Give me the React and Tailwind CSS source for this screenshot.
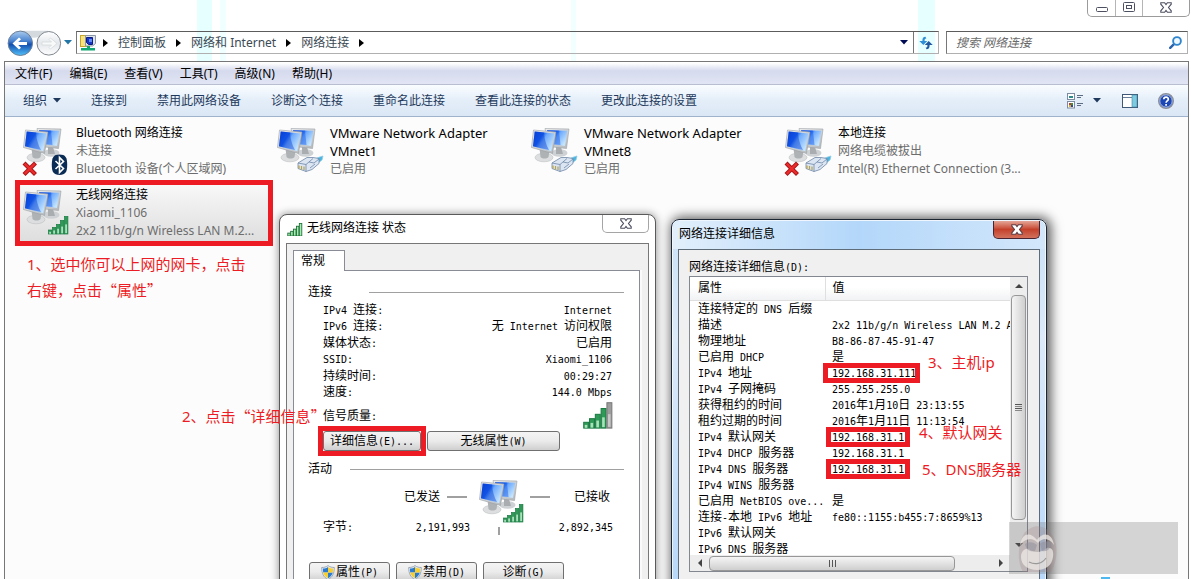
import React from "react";

const UI = "font-['Noto_Sans','Noto_Sans_CJK_SC',sans-serif]";

/* Text in the dialog font: Latin characters take half the width of a Chinese one. */
function Sim({ children }) {
  return String(children)
    .split(/([\x20-\x7e]+)/)
    .filter(Boolean)
    .map((run, i) =>
      /^[\x20-\x7e]/.test(run) ? (
        <span key={i} className="whitespace-pre font-['DejaVu_Sans_Mono',monospace] text-[10px]">{run}</span>
      ) : (
        run
      )
    );
}

function Monitors({ id }) {
  return (
    <>
      <defs>
        <linearGradient id={id + "s"} x1="0" y1="0" x2="1" y2=".6">
          <stop offset="0" stopColor="#0b45dc" />
          <stop offset="0.4" stopColor="#1d66f2" />
          <stop offset="0.55" stopColor="#6fabfb" />
          <stop offset="1" stopColor="#c4e4ff" />
        </linearGradient>
        <linearGradient id={id + "f"} x1="0" y1="0" x2="1" y2="1">
          <stop offset="0" stopColor="#f0f0f0" />
          <stop offset="1" stopColor="#b2b6b9" />
        </linearGradient>
      </defs>
      <ellipse cx="29.500" cy="27" rx="8" ry="3.800" fill="#cfd2d4" />
      <path d="M26 20l5 1 2 7h-7z" fill="#a9adb0" />
      <path d="M15 2.500l24 .5L36.500 22.500l-18-2z" fill={`url(#${id}f)`} stroke="#9ba0a4" strokeWidth=".6" />
      <path d="M17 4.200l20.300.5L35 20l-14-2z" fill={`url(#${id}s)`} />
      <path d="M17 4.200l12 .3 1.500 14.600L21 18z" fill="#1659e6" opacity=".45" />
      <ellipse cx="14" cy="31.500" rx="9" ry="4.300" fill="#dcdedf" stroke="#b4b8bb" strokeWidth=".5" />
      <path d="M9.500 22l10 3-1 6c-2 2-6 2-8 0z" fill="#aeb2b5" />
      <path d="M3.500 4L26 6 22.500 27.500 1.500 21.500z" fill={`url(#${id}f)`} stroke="#9a9fa3" strokeWidth=".6" />
      <path d="M4.700 5.500L24.400 7.400 21.300 25.300 3 20.200z" fill={`url(#${id}s)`} />
      <path d="M10.500 6l3.500.4c.5 7 2 12 5 17.600L3 20.200 4.700 5.500z" fill="#0034cc" opacity=".4" />
    </>
  );
}

function Bars({ x = 0, y = 0, s = 1, light, dim }) {
  const bars = [[0, 14, 4], [4, 11.500, 6.500], [8, 8.500, 9.500], [12, 4.500, 13.500], [16, 0.500, 17.500]];
  return (
    <g transform={`translate(${x} ${y}) scale(${s})`}>
      {bars.map(([bx, by, h], i) => {
        const gray = dim && i === 4;
        return (
          <g key={bx}>
            <rect
              x={bx + 0.5}
              y={by}
              width="3.400"
              height={h}
              fill={gray ? "#9d9d9d" : light ? "#a5ecb0" : "#2f9a58"}
              stroke={gray ? "#777" : light ? "#1c6b35" : "#1a7a42"}
              strokeWidth={light ? 1.2 : 0.7}
            />
            {!light && <rect x={bx + 1.2} y={by + h * 0.45} width="1.800" height={h * 0.5} fill={gray ? "#c8c8c8" : "#a9e2ba"} />}
          </g>
        );
      })}
    </g>
  );
}

function AdapterIcon({ id, badge, off }) {
  return (
    <svg viewBox="0 0 50 50" className="h-[50px] w-[50px] shrink-0" aria-hidden="true">
      <Monitors id={id} />
      {badge === "signal" && <Bars x={26} y={28} />}
      {badge === "bluetooth" && (
        <g>
          <path d="M37.500 28.500c6 0 7.700 3 7.700 10.200s-1.700 10.200-7.700 10.200-7.700-3-7.700-10.200 1.700-10.200 7.700-10.200z" fill="#0b2c55" />
          <path d="M33.500 35l8 7.500-4 4V31.500l4 4-8 7.500" fill="none" stroke="#fff" strokeWidth="1.600" />
        </g>
      )}
      {badge === "plug" && (
        <g stroke="#6f86a6" strokeWidth=".8">
          <path d="M38 34c4-3 6-3 9-4l-1 4-5 4z" fill="#48b4e0" stroke="#8fcbe4" />
          <path d="M22 37l9-5.500h6l6 1v5l-7 6-6 2-8-3z" fill="#dce6f3" />
          <path d="M22 37l8 1.500 7-6M30 38.500v7M33 36l5 1 5-4M34 42l5-4" fill="none" />
          <path d="M23 39.500v3M25.500 40v3.500M28 40.500v3.500" stroke="#b8a24c" strokeWidth="1.200" />
        </g>
      )}
      {off && (
        <g strokeLinecap="square">
          <path d="M3.500 38.500l8.500 8.500M12 38.500L3.500 47" stroke="#a81216" strokeWidth="4.200" />
          <path d="M3.500 38.500l8.500 8.500M12 38.500L3.500 47" stroke="#ea2c2c" strokeWidth="2.400" />
        </g>
      )}
    </svg>
  );
}

const adapters = [
  { id: "bt", name: ["Bluetooth 网络连接"], info: ["未连接", "Bluetooth 设备(个人区域网)"], badge: "bluetooth", off: true },
  { id: "v1", name: ["VMware Network Adapter", "VMnet1"], info: ["已启用"], badge: "plug", wide: true },
  { id: "v8", name: ["VMware Network Adapter", "VMnet8"], info: ["已启用"], badge: "plug", wide: true },
  { id: "lan", name: ["本地连接"], info: ["网络电缆被拔出", "Intel(R) Ethernet Connection (3..."], badge: "plug", off: true },
  { id: "wl", name: ["无线网络连接"], info: ["Xiaomi_1106", "2x2 11b/g/n Wireless LAN M.2..."], badge: "signal", selected: true },
];

function Adapter({ a }) {
  return (
    <button
      className={
        "relative flex h-14 gap-1 pt-[3px] pl-0.5 text-left " +
        (a.selected ? "bg-linear-to-b from-[#f8f8f8] to-[#dedede]" : "")
      }
    >
      {a.selected && <i aria-hidden="true" className="absolute -inset-[5px] border-[5px] border-[#ed1c24]" />}
      <AdapterIcon id={a.id} badge={a.badge} off={a.off} />
      <span className="-mt-0.5 flex flex-col text-[12px] leading-[18px] whitespace-nowrap">
        {a.name.map((t) => <span key={t} className={"h-[18px] text-black " + (a.wide ? "text-[13px]" : "")}>{t}</span>)}
        {a.info.map((t) => <span key={t} className="h-[18px] text-[#6d6d6d]">{t}</span>)}
      </span>
    </button>
  );
}

function Caret({ className = "" }) {
  return (
    <svg viewBox="0 0 8 5" className={"h-[5px] w-2 " + className} aria-hidden="true">
      <path d="M0 0h8L4 4.500z" fill="currentColor" />
    </svg>
  );
}

function Crumb() {
  return (
    <svg viewBox="0 0 5 8" className="h-2 w-[5px] shrink-0" aria-hidden="true">
      <path d="M0 0l5 4-5 4z" fill="#000" />
    </svg>
  );
}

function CloseGlyph({ light }) {
  return (
    <svg viewBox="0 0 12 11" className="h-[11px] w-3" aria-hidden="true">
      <path
        d="M.8.7h3.800L6 2.600 7.400.7h3.800v1.500L8.500 5.500l2.700 3.300v1.500H7.400L6 8.400l-1.400 1.900H.8V8.800l2.700-3.300L.8 2.200z"
        fill="#fff"
        stroke={light ? "#5d3b41" : "#4d5060"}
        strokeWidth="1.100"
      />
    </svg>
  );
}

function Header() {
  return (
    <header className="relative h-[61px] shrink-0 bg-white">
      <div aria-hidden="true" className="absolute inset-y-0 left-[197px] flex gap-2">
        <i className="w-[15px] bg-[#e6ffff]" />
        <i className="w-[6px] bg-[#f0ffff]" />
      </div>
      <i aria-hidden="true" className="absolute inset-y-0 left-[571px] w-[5px] bg-[#f2ffff]" />
      <i aria-hidden="true" className="absolute inset-y-0 left-[918px] w-[17px] bg-[#e6ffff]" />
      <div className="absolute top-0 right-px flex h-[17px] rounded-b-[5px] border border-t-0 border-[#9b9b9b] bg-white">
        <button aria-label="最小化" className="flex w-7 justify-center border-r border-[#b5b5b5] pt-[7px]">
          <svg viewBox="0 0 12 6" className="h-[6px] w-3"><rect x=".5" y=".5" width="11" height="4" rx="1" fill="#fff" stroke="#4d5060" /></svg>
        </button>
        <button aria-label="还原" className="flex w-[27px] justify-center border-r border-[#b5b5b5] pt-0.5">
          <svg viewBox="0 0 12 10" className="h-[10px] w-3"><rect x=".5" y=".5" width="11" height="9" rx="1" fill="#fff" stroke="#4d5060" /><rect x="3.500" y="3.500" width="5" height="3" fill="#fff" stroke="#4d5060" /></svg>
        </button>
        <button aria-label="关闭" className="flex w-[46px] justify-center pt-0.5"><CloseGlyph /></button>
      </div>
      <div className="relative flex items-center pt-[31px] pr-[3px] pl-[7px]">
        <button aria-label="后退和前进" className="mr-px shrink-0">
          <svg viewBox="0 0 56 26" className="-my-0.5 h-[26px] w-[56px]">
            <defs>
              <linearGradient id="back" x1="0" y1="0" x2="0" y2="1">
                <stop offset="0" stopColor="#a9cbee" />
                <stop offset=".4" stopColor="#4a84d0" />
                <stop offset=".55" stopColor="#1450b0" />
                <stop offset="1" stopColor="#52c0fa" />
              </linearGradient>
              <linearGradient id="fwd" x1="0" y1="0" x2="0" y2="1">
                <stop offset="0" stopColor="#fff" />
                <stop offset=".5" stopColor="#e4e8ec" />
                <stop offset="1" stopColor="#fdfdfd" />
              </linearGradient>
            </defs>
            <path d="M13 .8h28v4c-6 0-8 3-14 3s-8-3-14-3z" fill="#d4d9de" />
            <circle cx="13.300" cy="13.300" r="12.200" fill="url(#back)" stroke="#6d7f97" />
            <path d="M5.500 13.500l6.500-6 2 1.800-2.800 2.700H20v3h-8.800l2.800 2.700-2 1.800z" fill="#fff" />
            <circle cx="41.800" cy="13.300" r="11.800" fill="url(#fwd)" stroke="#80878f" />
            <path d="M50 13.500l-6.500-5.500-1.500 1.500 2.500 2.500H35v3h9.500L42 17.500l1.500 1.500z" fill="#f8fafa" stroke="#d4d9dc" strokeWidth=".8" />
          </svg>
        </button>
        <Caret className="mr-1 shrink-0 text-[#2276a8]" />
        <nav className="flex h-[23px] min-w-0 flex-1 items-center border border-[#b0b0b0] border-t-[#5c5c5c] border-l-[#777] pl-[3px] text-[12px] text-[#3b4a54]">
          <svg viewBox="0 0 16 16" className="mr-[7px] h-4 w-4 shrink-0" aria-hidden="true">
            <rect x=".5" y=".5" width="9" height="11" fill="#f7e27c" stroke="#c7a52a" />
            <path d="M5.500 .5h10v8l-3 2.500h-7z" fill="#dfe3ea" stroke="#8c97a8" />
            <path d="M6.500 2.500h6v7h-4l-2-2z" fill="#1a36c8" stroke="#0b1c80" />
            <path d="M9 4h3v3H9z" fill="#5f8cf5" />
            <path d="M7 11h3v2h5v2.500H1V13h6z" fill="#12a873" />
          </svg>
          <Crumb />
          <a href="#panel" className="mx-[10px] whitespace-nowrap">控制面板</a>
          <Crumb />
          <a href="#internet" className="mx-[10px] whitespace-nowrap">网络和 Internet</a>
          <Crumb />
          <a href="#connections" className="mx-[10px] whitespace-nowrap">网络连接</a>
          <Crumb />
          <button aria-label="历史记录" className="mr-[5px] ml-auto text-[#000b55]"><Caret /></button>
          <button aria-label="刷新" className="flex h-full w-[25px] items-center justify-center border-l border-[#777]">
            <svg viewBox="0 0 14 14" className="h-[14px] w-[14px]">
              <path d="M6.500.8C4.200.8 3.400 2 3.400 5H.3l4 4 4-4H5.600c0-1.800 0-2.600 1.700-2.600z" fill="#2f8fd6" />
              <path d="M7.500 13.200c2.300 0 3.100-1.200 3.100-4.200h3.100l-4-4-4 4h2.700c0 1.800 0 2.600-1.700 2.600z" fill="#23589f" />
            </svg>
          </button>
        </nav>
        <label className="ml-[7px] flex h-[23px] w-[242px] shrink-0 items-center border border-[#b0b0b0] border-t-[#5c5c5c] border-l-[#777] pr-[5px] pl-[9px]">
          <input
            type="search"
            aria-label="搜索 网络连接"
            placeholder="搜索 网络连接"
            className="min-w-0 flex-1 bg-transparent text-[12px] italic outline-none placeholder:text-[#6b6b6b]"
          />
          <svg viewBox="0 0 13 13" className="h-[13px] w-[13px]" aria-hidden="true">
            <path d="M1.200 11.800l4-4" stroke="#2b62ac" strokeWidth="2.400" strokeLinecap="round" />
            <circle cx="8" cy="5" r="3.900" fill="#eef8ff" stroke="#2f86cf" strokeWidth="1.900" />
          </svg>
        </label>
      </div>
    </header>
  );
}

const menus = ["文件(F)", "编辑(E)", "查看(V)", "工具(T)", "高级(N)", "帮助(H)"];
const commands = ["连接到", "禁用此网络设备", "诊断这个连接", "重命名此连接", "查看此连接的状态", "更改此连接的设置"];

function Toolbar() {
  return (
    <div className="flex h-8 items-center border-b border-[#a0b3cc] bg-linear-to-b from-[#fafdff] via-[#e4eef9] via-50% to-[#dbe7f5] pr-[14px] pl-[18px] text-[12px] text-[#1e395b]">
      <div className="flex gap-[30px] whitespace-nowrap">
        <button className="flex items-center gap-[6px]">组织<Caret /></button>
        {commands.map((c) => <button key={c}>{c}</button>)}
      </div>
      <button aria-label="更改视图" className="ml-auto flex items-center gap-[10px]">
        <svg viewBox="0 0 16 16" className="h-4 w-4">
          <rect x=".5" y=".5" width="7" height="6" fill="#fff" stroke="#7d8ba0" />
          <rect x="2" y="3" width="4" height="2" fill="#2a8a8c" />
          <rect x=".5" y="8.500" width="7" height="6.500" fill="#fff" stroke="#7d8ba0" />
          <path d="M2 10h2v2H2z" fill="#c33" /><path d="M4 10h2v2H4z" fill="#2a9c3c" /><path d="M2 12h2v2H2z" fill="#e0b020" /><path d="M4 12h2v2H4z" fill="#2546b8" />
          <path d="M10 2.500h6M10 4.500h4M10 10.500h6M10 12.500h4" stroke="#5b6c83" />
        </svg>
        <Caret />
      </button>
      <button aria-label="显示预览窗格" className="ml-[21px]">
        <svg viewBox="0 0 16 14" className="h-[14px] w-4">
          <rect x=".5" y=".5" width="15" height="13" fill="#fff" stroke="#3f5877" />
          <path d="M1 3.500h9" stroke="#6a7f9b" />
          <rect x="10" y="1" width="5" height="12" fill="#7ccbe0" stroke="#4488a5" strokeWidth=".6" />
        </svg>
      </button>
      <button aria-label="帮助" className="ml-5">
        <svg viewBox="0 0 16 16" className="h-4 w-4">
          <circle cx="8" cy="8" r="7.300" fill="#1c47b4" stroke="#8b8f99" strokeWidth="1.400" />
          <circle cx="8" cy="8" r="6.200" fill="none" stroke="#dfe8f6" strokeWidth=".7" />
          <path d="M5.800 6.300c0-3 4.600-2.900 4.500-.1 0 1.700-2.200 1.700-2.200 3.500M8.100 11v1.800" fill="none" stroke="#fff" strokeWidth="1.700" />
        </svg>
      </button>
    </div>
  );
}

const statusRows = [
  ["IPv4 连接:", "Internet"],
  ["IPv6 连接:", "无 Internet 访问权限"],
  ["媒体状态:", "已启用"],
  ["SSID:", "Xiaomi_1106"],
  ["持续时间:", "00:29:27"],
  ["速度:", "144.0 Mbps"],
];

function PushButton({ className = "", marked, children }) {
  return (
    <button
      className={
        "relative flex h-5 items-center justify-center rounded-[3px] border border-[#707070] bg-linear-to-b from-[#f4f4f4] via-[#ebebeb] via-50% to-[#cfcfcf] whitespace-nowrap " +
        className
      }
    >
      {children}
      {marked && <i aria-hidden="true" className="absolute -inset-[6px] border-[5px] border-[#ed1c24]" />}
    </button>
  );
}

function Shield() {
  return (
    <svg viewBox="0 0 14 15" className="mr-px h-[15px] w-[14px]" aria-hidden="true">
      <path d="M7 .6c2 1.500 4 1.900 6.300 1.900 0 6-1.800 9.600-6.300 12C2.500 12.100.7 8.500.7 2.500 3 2.500 5 2.100 7 .6z" fill="#e9eef4" stroke="#8a97a8" strokeWidth=".8" />
      <path d="M7 2v5.500H2.200C2 6.300 1.900 5 1.900 3.600 4 3.500 5.500 3 7 2zM7 7.500h4.800c-.6 2.600-2.200 4.400-4.800 5.700z" fill="#2a7bd0" />
      <path d="M7 2v5.500h4.800c.2-1.200.3-2.500.3-3.900C10 3.500 8.500 3 7 2zM7 7.500H2.200c.6 2.600 2.200 4.400 4.800 5.700z" fill="#f8cf2c" />
    </svg>
  );
}

function StatusDialog() {
  return (
    <section className="absolute top-[214px] left-[279px] w-[377px] rounded-t-[8px] border border-[#5a5a5a] bg-white px-[6px] pb-[6px] shadow-[0_0_8px_rgba(0,0,0,0.45)]">
      <div className="flex h-7 items-start">
        <svg viewBox="0 0 21 18" className="mt-2 ml-px h-[13px] w-4" aria-hidden="true"><Bars light /></svg>
        <h2 className="mt-1 ml-1 flex-1 text-[12px] leading-[18px]">无线网络连接 状态</h2>
        <button aria-label="关闭" className="flex h-[18px] w-[47px] items-center justify-center rounded-b-[5px] border border-t-0 border-[#a5a5a5] pb-px"><CloseGlyph /></button>
      </div>
      <div className="border border-[#777] bg-[#f0f0f0] px-[6px] pt-[6px] pb-[10px] text-[12px] text-black">
        <div role="tablist" className="flex">
          <button role="tab" aria-selected="true" className="relative z-10 -mb-px h-[21px] w-[52px] border border-b-0 border-[#898c95] bg-white pr-3 leading-[18px]">常规</button>
        </div>
        <div className="mr-[2px] border border-[#898c95] bg-white pt-[13px] pr-[15px] pb-5 pl-[14px] shadow-[2px_0_0_#fafafa]">
          <div className="flex h-4 items-center gap-[37px]">
            <h3 className="leading-4">连接</h3>
            <i className="h-px flex-1 bg-[#a0a0a0]" />
          </div>
          <dl className="mt-0.5 ml-[15px] flex h-[98px] flex-col justify-between pr-3">
            {statusRows.map(([k, v]) => (
              <div key={k} className="flex h-4 justify-between leading-4">
                <dt><Sim>{k}</Sim></dt>
                <dd><Sim>{v}</Sim></dd>
              </div>
            ))}
          </dl>
          <div className="ml-[15px] flex h-[31px] items-center justify-between pr-[10px]">
            <span><Sim>信号质量:</Sim></span>
            <svg viewBox="0 0 31 27" className="h-[27px] w-[31px]" aria-hidden="true"><Bars s={1.45} dim /></svg>
          </div>
          <div className="flex gap-[6px] pl-[15px]">
            <PushButton className="w-[98px]" marked><Sim>详细信息(E)...</Sim></PushButton>
            <PushButton className="w-[133px]"><Sim>无线属性(W)</Sim></PushButton>
          </div>
          <div className="mt-[10px] flex h-4 items-center gap-[18px]">
            <h3 className="leading-4">活动</h3>
            <i className="h-px flex-1 bg-[#a0a0a0]" />
          </div>
          <div className="flex h-10 items-center pr-[14px] pl-24">
            <span>已发送</span>
            <i className="mx-[7px] h-0.5 w-5 bg-[#a0a0a0]" />
            <svg viewBox="0 0 50 50" className="-mb-3 ml-1 h-[50px] w-[50px]" aria-hidden="true"><Monitors id="act" /><Bars x={25} y={26} /></svg>
            <i className="ml-0.5 h-0.5 w-5 bg-[#a0a0a0]" />
            <span className="ml-auto">已接收</span>
          </div>
          <div className="mt-0.5 flex h-4 pr-[11px] pl-[15px] leading-4">
            <span className="w-16"><Sim>字节:</Sim></span>
            <span className="w-[83px] text-right"><Sim>2,191,993</Sim></span>
            <i className="mt-2 ml-7 h-2 w-0.5 bg-[#a0a0a0]" />
            <span className="ml-auto"><Sim>2,892,345</Sim></span>
          </div>
          <div className="mt-[27px] flex gap-[6px] pl-px">
            <PushButton className="w-[81px]"><Shield /><Sim>属性(P)</Sim></PushButton>
            <PushButton className="w-[81px]"><Shield /><Sim>禁用(D)</Sim></PushButton>
            <PushButton className="w-[81px]"><Sim>诊断(G)</Sim></PushButton>
          </div>
        </div>
      </div>
    </section>
  );
}

const details = [
  ["连接特定的 DNS 后缀", ""],
  ["描述", "2x2 11b/g/n Wireless LAN M.2 Adapter"],
  ["物理地址", "B8-86-87-45-91-47"],
  ["已启用 DHCP", "是"],
  ["IPv4 地址", "192.168.31.111", "w-[97px] -left-0.5"],
  ["IPv4 子网掩码", "255.255.255.0"],
  ["获得租约的时间", "2016年1月10日 23:13:55"],
  ["租约过期的时间", "2016年1月11日 11:13:54"],
  ["IPv4 默认网关", "192.168.31.1", "w-[84px] left-px"],
  ["IPv4 DHCP 服务器", "192.168.31.1"],
  ["IPv4 DNS 服务器", "192.168.31.1", "w-[84px] left-px"],
  ["IPv4 WINS 服务器", ""],
  ["已启用 NetBIOS ove...", "是"],
  ["连接-本地 IPv6 地址", "fe80::1155:b455:7:8659%13"],
  ["IPv6 默认网关", ""],
  ["IPv6 DNS 服务器", ""],
];

function Tri({ d }) {
  return (
    <svg viewBox="0 0 8 8" className="h-2 w-2 shrink-0" aria-hidden="true"><path d={d} fill="#444" /></svg>
  );
}

function DetailsDialog() {
  return (
    <section className="absolute top-[219px] left-[671px] w-[376px] rounded-t-[8px] border border-[#1d2733] bg-linear-to-b from-[#c9e1f8] via-[#dceafa] via-30% to-[#b3d6fb] px-[6px] pb-[6px] shadow-[2px_0_12px_2px_rgba(0,0,0,0.65),inset_0_0_0_1px_rgba(255,255,255,0.7)]">
      <div className="-mx-[5px] mt-px flex h-7 items-start rounded-t-[7px] bg-linear-to-r from-[#e2effb] via-[#b3d7fa] via-50% to-[#d3e7fb] px-[5px]">
        <h2 className="mt-1 ml-px flex-1 text-[12px] leading-[18px]">网络连接详细信息</h2>
        <button aria-label="关闭" className="flex h-[18px] w-[47px] items-center justify-center rounded-b-[5px] border border-t-0 border-[#4a2530] bg-linear-to-b from-[#e3a597] via-[#c4402b] via-50% to-[#d2705c]"><CloseGlyph light /></button>
      </div>
      <div className="border border-[#5e6b78] bg-[#f0f0f0] px-[10px] pt-[7px] pb-8 text-[12px] text-black">
        <p className="h-[19px] leading-5"><Sim>网络连接详细信息(D):</Sim></p>
        <div className="mr-px border border-[#828790] bg-white">
          <div className="flex">
            <div className="h-[278px] min-w-0 flex-1 overflow-hidden">
              <table className="w-full table-fixed border-collapse">
                <thead>
                  <tr className="h-[23px] bg-linear-to-b from-white via-white via-45% to-[#f1f2f4] text-left">
                    <th className="w-[135px] border-r border-b border-[#dfdfdf] p-0 pl-2 font-normal">属性</th>
                    <th className="border-b border-[#dfdfdf] p-0 pl-[7px] font-normal">值</th>
                  </tr>
                </thead>
                <tbody>
                  {details.map(([k, v, mark]) => (
                    <tr key={k}>
                      <td className="p-0 pl-2"><div className="h-4 leading-4 whitespace-nowrap"><Sim>{k}</Sim></div></td>
                      <td className="p-0">
                        <div className="relative h-4 pl-[7px] leading-4 whitespace-nowrap">
                          <Sim>{v}</Sim>
                          {mark && <i className={"absolute -top-0.5 h-5 border-[5px] border-[#ed1c24] " + mark} />}
                        </div>
                      </td>
                    </tr>
                  ))}
                </tbody>
              </table>
            </div>
            <div className="flex w-[17px] flex-col items-center bg-[#ededed]">
              <div className="flex h-[18px] items-center"><Tri d="M0 6l4-4 4 4z" /></div>
              <div className="flex h-[225px] w-[15px] flex-col items-center justify-center gap-px rounded-sm border border-[#979797] bg-linear-to-r from-[#f5f5f5] to-[#cfcfcf]">
                <i className="h-px w-[7px] bg-[#555]" /><i className="h-px w-[7px] bg-[#888]" /><i className="h-px w-[7px] bg-[#555]" /><i className="h-px w-[7px] bg-[#888]" />
              </div>
              <div className="mt-auto flex h-[20px] items-center"><Tri d="M0 2h8L4 6z" /></div>
            </div>
          </div>
          <div className="flex h-4 items-center bg-[#ededed] pr-[22px]">
            <div className="flex w-[19px] justify-center"><Tri d="M6 0L2 4l4 4z" /></div>
            <div className="flex h-[15px] w-[246px] items-center justify-center gap-0.5 rounded-sm border border-[#979797] bg-linear-to-b from-[#f5f5f5] to-[#cfcfcf]">
              <i className="h-[7px] w-px bg-[#555]" /><i className="h-[7px] w-px bg-[#555]" /><i className="h-[7px] w-px bg-[#555]" />
            </div>
            <div className="ml-auto"><Tri d="M2 0l4 4-4 4z" /></div>
          </div>
        </div>
      </div>
    </section>
  );
}

function Note({ className, children }) {
  return <p className={"absolute text-[15px] leading-[26px] whitespace-nowrap text-[#ed1c24] " + className}>{children}</p>;
}

/* Full-width Chinese quotation marks around a term. */
function Quoted({ children }) {
  return <span lang="zh-CN" className="font-['Noto_Sans_CJK_SC',sans-serif]">“{children}”</span>;
}

function Watermark() {
  return (
    <div aria-hidden="true" className="absolute top-[522px] left-[1009px] h-[52px] w-[169px] bg-[rgba(90,90,90,0.25)]">
      <svg viewBox="0 0 60 52" className="h-[52px] w-[60px]">
        <path d="M16 10c10-10 22-6 28 4 6 10 4 26-2 36H14C8 40 8 22 16 10z" fill="#a08080" opacity=".25" />
        <path d="M11 23c2-13 11-13 17-5 5-8 15-8 17 5-5-7-11-8-16-2-6-6-12-5-18 2z" fill="#eeeae6" opacity=".75" />
        <path d="M12 35c0-6 4-9 8-8 5 4 12 4 18-1 5-1 7 3 6 9-1 8-7 13-16 13s-16-5-16-13z" fill="#eeeae6" opacity=".75" />
        <path d="M16 22c4-3 9-2 12 1l-2 6c-5 1-9-1-10-7zM31 22c3-3 8-3 11-1 0 6-4 9-9 8z" fill="#8f8f9c" opacity=".55" />
        <path d="M20 40c6 3 13 2 17-4" fill="none" stroke="#999" strokeWidth="1.200" />
      </svg>
    </div>
  );
}

export default function App() {
  return (
    <div className={"relative flex h-screen flex-col overflow-hidden bg-white " + UI}>
      <Header />
      <main className="mr-[2px] ml-1 flex min-h-0 flex-1 flex-col border border-b-0 border-[#777] bg-[#fcfcfc]">
        <div className="flex h-[23px] items-center gap-[17px] border-b border-[#b9bfd0] bg-linear-to-b from-white from-5% via-[#d5daed] via-40% to-[#e1e5f4] pt-0.5 pl-[10px] text-[12px] text-black">
          {menus.map((m) => <button key={m} className="whitespace-nowrap">{m}</button>)}
        </div>
        <Toolbar />
        <div className="grid grid-cols-[repeat(auto-fill,248px)] gap-[6px] pt-[6px] pl-[15px]">
          {adapters.map((a) => <Adapter key={a.id} a={a} />)}
        </div>
      </main>
      <StatusDialog />
      <DetailsDialog />
      <Note className="top-[251px] left-[27px]">1、选中你可以上网的网卡，点击<br />右键，点击<Quoted>属性</Quoted></Note>
      <Note className="top-[403px] left-[182px]">2、点击<Quoted>详细信息</Quoted></Note>
      <Note className="top-[349px] left-[928px]">3、主机ip</Note>
      <Note className="top-[419px] left-[919px]">4、默认网关</Note>
      <Note className="top-[456px] left-[922px]">5、DNS服务器</Note>
      <Watermark />
      <i aria-hidden="true" className="absolute bottom-0 left-[1101px] h-0.5 w-[9px] bg-[#4db8f0]" />
    </div>
  );
}
